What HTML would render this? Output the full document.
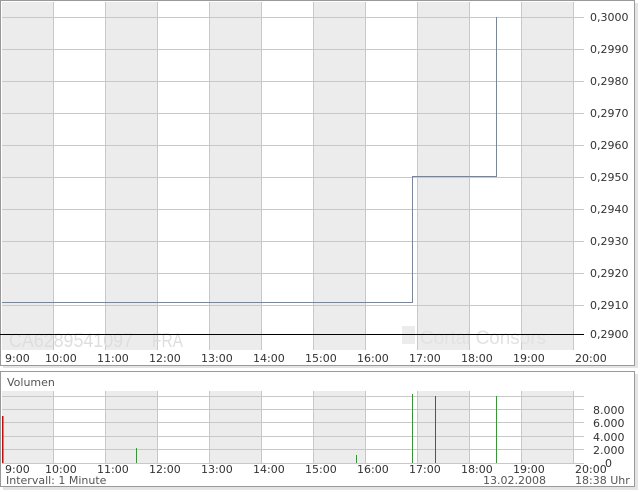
<!DOCTYPE html>
<html><head><style>
html,body{margin:0;padding:0;background:#fff;width:640px;height:492px;overflow:hidden}
svg{display:block}
text{font-family:"DejaVu Sans","Liberation Sans",sans-serif;font-size:11px;fill:#333}
.wm{font-family:"Liberation Sans",sans-serif;font-size:19px;fill:#dedede}
</style></head><body>
<svg width="640" height="492" xmlns="http://www.w3.org/2000/svg">
<rect x="3" y="3" width="635" height="365" fill="#e4e4e4"/>
<rect x="3" y="374" width="635" height="116" fill="#e4e4e4"/>
<rect x="0.5" y="0.5" width="634" height="365" fill="#fff" stroke="#999"/>
<g fill="#ececec">
<rect x="2" y="2" width="51" height="348"/><rect x="106" y="2" width="51" height="348"/>
<rect x="210" y="2" width="51" height="348"/><rect x="314" y="2" width="51" height="348"/>
<rect x="418" y="2" width="51" height="348"/><rect x="522" y="2" width="51" height="348"/>
</g>
<g stroke="#c8c8c8" stroke-width="1">
<path d="M53.5 2V350M105.5 2V350M157.5 2V350M209.5 2V350M261.5 2V350M313.5 2V350M365.5 2V350M417.5 2V350M469.5 2V350M521.5 2V350M573.5 2V350"/>
<path d="M2 17.5H584M2 49.5H584M2 81.5H584M2 113.5H584M2 145.5H584M2 177.5H584M2 209.5H584M2 241.5H584M2 273.5H584M2 305.5H584"/>
</g>
<text class="wm" x="9" y="347" textLength="124" lengthAdjust="spacingAndGlyphs">CA6289541097</text>
<text class="wm" x="152" y="347" textLength="31" lengthAdjust="spacingAndGlyphs">FRA</text>
<text class="wm" x="420" y="344" textLength="126" lengthAdjust="spacingAndGlyphs" style="fill:#e2e2e2">Cortal Consors</text>
<rect x="402" y="326" width="13" height="18" fill="#ececec"/>
<path d="M2 302.5H412.5V176.5H496.5V17" fill="none" stroke="#6f86b0" stroke-width="1"/>
<path d="M0 334.5H584" stroke="#000" stroke-width="1"/>
<g>
<text x="590" y="21">0,3000</text><text x="590" y="53">0,2990</text><text x="590" y="85">0,2980</text>
<text x="590" y="117">0,2970</text><text x="590" y="149">0,2960</text><text x="590" y="181">0,2950</text>
<text x="590" y="213">0,2940</text><text x="590" y="245">0,2930</text><text x="590" y="277">0,2920</text>
<text x="590" y="309">0,2910</text><text x="590" y="338">0,2900</text>
</g>
<g>
<text x="5" y="362">9:00</text><text x="45" y="362">10:00</text><text x="97" y="362">11:00</text>
<text x="149" y="362">12:00</text><text x="201" y="362">13:00</text><text x="253" y="362">14:00</text>
<text x="305" y="362">15:00</text><text x="357" y="362">16:00</text><text x="409" y="362">17:00</text>
<text x="461" y="362">18:00</text><text x="513" y="362">19:00</text><text x="575" y="362">20:00</text>
</g>
<rect x="0.5" y="371.5" width="634" height="115" fill="#fff" stroke="#999"/>
<text x="7" y="386" style="fill:#555">Volumen</text>
<g fill="#ececec">
<rect x="2" y="391" width="51" height="72"/><rect x="106" y="391" width="51" height="72"/>
<rect x="210" y="391" width="51" height="72"/><rect x="314" y="391" width="51" height="72"/>
<rect x="418" y="391" width="51" height="72"/><rect x="522" y="391" width="51" height="72"/>
</g>
<g stroke="#c8c8c8">
<path d="M53.5 391V463M105.5 391V463M157.5 391V463M209.5 391V463M261.5 391V463M313.5 391V463M365.5 391V463M417.5 391V463M469.5 391V463M521.5 391V463M573.5 391V463"/>
<path d="M2 396.5H584M2 409.5H584M2 422.5H584M2 436.5H584M2 449.5H584M2 463.5H584"/>
</g>
<g stroke-width="1">
<rect x="2" y="416" width="1.5" height="47" fill="#d00"/>
<path d="M136.5 448V463" stroke="#0b0"/>
<path d="M356.5 455V463" stroke="#0b0"/>
<path d="M412.5 394V463" stroke="#0b0"/>
<path d="M435.5 396V463" stroke="#555"/>
<path d="M496.5 396V463" stroke="#0b0"/>
</g>
<text x="593" y="414">8.000</text><text x="593" y="427">6.000</text><text x="593" y="441">4.000</text>
<text x="593" y="454">2.000</text><text x="605" y="467">0</text>
<g>
<text x="5" y="473">9:00</text><text x="45" y="473">10:00</text><text x="97" y="473">11:00</text>
<text x="149" y="473">12:00</text><text x="201" y="473">13:00</text><text x="253" y="473">14:00</text>
<text x="305" y="473">15:00</text><text x="357" y="473">16:00</text><text x="409" y="473">17:00</text>
<text x="461" y="473">18:00</text><text x="513" y="473">19:00</text><text x="575" y="473">20:00</text>
</g>
<text x="6" y="484" style="fill:#555">Intervall: 1 Minute</text>
<text x="483" y="484" style="fill:#555">13.02.2008</text>
<text x="575" y="484" style="fill:#555">18:38 Uhr</text>
</svg>
</body></html>
